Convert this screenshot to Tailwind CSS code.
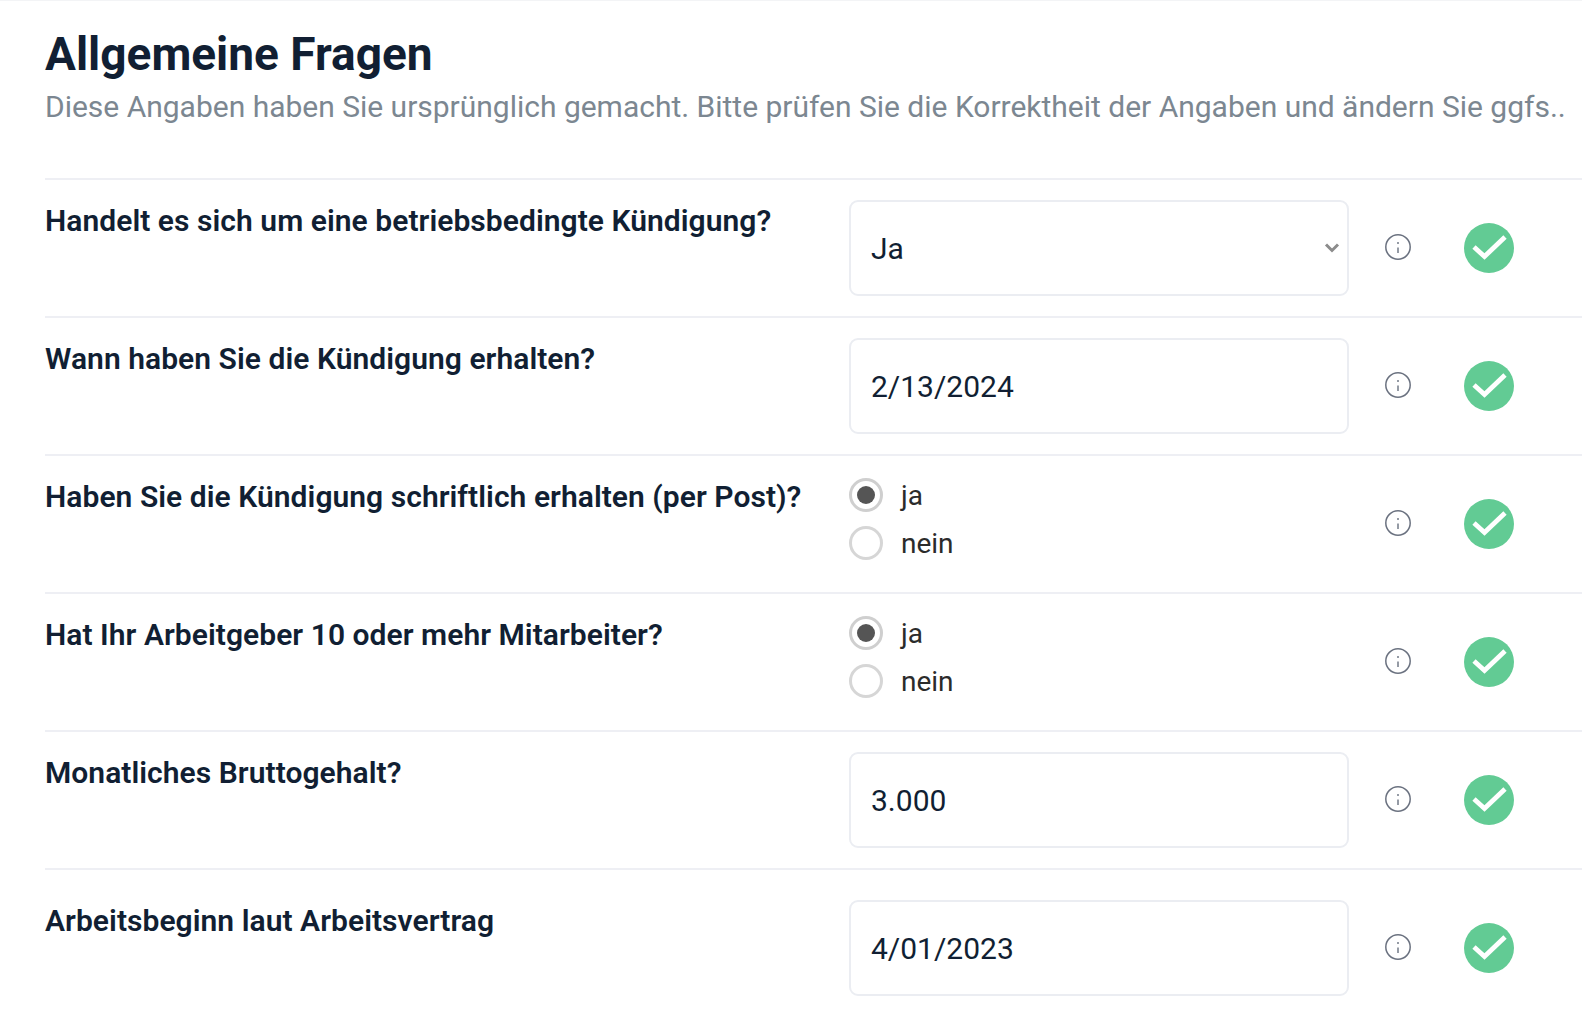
<!DOCTYPE html>
<html lang="de">
<head>
<meta charset="utf-8">
<title>Allgemeine Fragen</title>
<script src="https://cdn.jsdelivr.net/npm/@tailwindcss/browser@4"></script>
</head>
<body class="bg-white font-['Roboto',sans-serif] text-[#111f33] overflow-hidden">
<div class="w-[1582px] h-[1018px] pl-[45px] pt-[27px] border-t border-[#f3f4f6]">
  <h1 class="text-[46px] leading-[52px] font-bold">Allgemeine Fragen</h1>
  <p class="mt-[2px] text-[30px] leading-[50px] tracking-[-0.01px] text-[#7c8791] whitespace-nowrap">Diese Angaben haben Sie ursprünglich gemacht. Bitte prüfen Sie die Korrektheit der Angaben und ändern Sie ggfs..</p>
  <div class="mt-[46px]">

    <div class="flex h-[138px] border-t-2 border-[#eeeff4] pt-[20px]">
      <div class="w-[804px] pt-[1px] text-[30px] leading-[40px] tracking-[0.05px] font-semibold">Handelt es sich um eine betriebsbedingte Kündigung?</div>
      <div class="relative flex items-center w-[500px] h-[96px] px-[20px] border-2 border-[#ebedf2] rounded-[9px] text-[30px]">Ja
        <svg class="absolute right-[7px] top-[37px] w-[16px] h-[16px] text-[#8c8c8c]" viewBox="0 0 16 16" fill="none" stroke="currentColor" stroke-width="3"><path d="M2 5.500l6 6 6-6"/></svg>
      </div>
      <div class="flex self-start h-[96px] ml-[36px] gap-[53px] items-center">
        <svg class="w-[26px] h-[26px] -mt-[2px]" viewBox="0 0 26 26" fill="none"><circle cx="13" cy="13" r="12.200" stroke="#6b7280" stroke-width="1.500"/><path d="M13 13.500V19M13 8v2" stroke="#8a919c" stroke-width="1.800"/></svg>
        <svg class="w-[50px] h-[50px]" viewBox="0 0 50 50"><circle cx="25" cy="25" r="25" fill="#62cb94"/><path d="M10 24l10.500 9.500L41 14" fill="none" stroke="#fff" stroke-width="4.800"/></svg>
      </div>
    </div>

    <div class="flex h-[138px] border-t-2 border-[#eeeff4] pt-[20px]">
      <div class="w-[804px] pt-[1px] text-[30px] leading-[40px] tracking-[0.05px] font-semibold">Wann haben Sie die Kündigung erhalten?</div>
      <div class="flex items-center w-[500px] h-[96px] px-[20px] border-2 border-[#ebedf2] rounded-[9px] text-[30px]">2/13/2024</div>
      <div class="flex self-start h-[96px] ml-[36px] gap-[53px] items-center">
        <svg class="w-[26px] h-[26px] -mt-[2px]" viewBox="0 0 26 26" fill="none"><circle cx="13" cy="13" r="12.200" stroke="#6b7280" stroke-width="1.500"/><path d="M13 13.500V19M13 8v2" stroke="#8a919c" stroke-width="1.800"/></svg>
        <svg class="w-[50px] h-[50px]" viewBox="0 0 50 50"><circle cx="25" cy="25" r="25" fill="#62cb94"/><path d="M10 24l10.500 9.500L41 14" fill="none" stroke="#fff" stroke-width="4.800"/></svg>
      </div>
    </div>

    <div class="flex h-[138px] border-t-2 border-[#eeeff4] pt-[20px]">
      <div class="w-[804px] pt-[1px] text-[30px] leading-[40px] tracking-[0.05px] font-semibold">Haben Sie die Kündigung schriftlich erhalten (per Post)?</div>
      <div class="w-[500px] h-[96px] -mt-[4px] text-[28px] text-[#2b2b2b]">
        <div class="flex items-center h-[48px] gap-[18px]"><span class="flex items-center justify-center w-[34px] h-[34px] -mt-[2px] rounded-full border-[3px] border-[#cfcfcf]"><span class="w-[18px] h-[18px] rounded-full bg-[#555555]"></span></span>ja</div>
        <div class="flex items-center h-[48px] gap-[18px]"><span class="w-[34px] h-[34px] -mt-[2px] rounded-full border-[3px] border-[#d6d6d6]"></span>nein</div>
      </div>
      <div class="flex self-start h-[96px] ml-[36px] gap-[53px] items-center">
        <svg class="w-[26px] h-[26px] -mt-[2px]" viewBox="0 0 26 26" fill="none"><circle cx="13" cy="13" r="12.200" stroke="#6b7280" stroke-width="1.500"/><path d="M13 13.500V19M13 8v2" stroke="#8a919c" stroke-width="1.800"/></svg>
        <svg class="w-[50px] h-[50px]" viewBox="0 0 50 50"><circle cx="25" cy="25" r="25" fill="#62cb94"/><path d="M10 24l10.500 9.500L41 14" fill="none" stroke="#fff" stroke-width="4.800"/></svg>
      </div>
    </div>

    <div class="flex h-[138px] border-t-2 border-[#eeeff4] pt-[20px]">
      <div class="w-[804px] pt-[1px] text-[30px] leading-[40px] tracking-[0.05px] font-semibold">Hat Ihr Arbeitgeber 10 oder mehr Mitarbeiter?</div>
      <div class="w-[500px] h-[96px] -mt-[4px] text-[28px] text-[#2b2b2b]">
        <div class="flex items-center h-[48px] gap-[18px]"><span class="flex items-center justify-center w-[34px] h-[34px] -mt-[2px] rounded-full border-[3px] border-[#cfcfcf]"><span class="w-[18px] h-[18px] rounded-full bg-[#555555]"></span></span>ja</div>
        <div class="flex items-center h-[48px] gap-[18px]"><span class="w-[34px] h-[34px] -mt-[2px] rounded-full border-[3px] border-[#d6d6d6]"></span>nein</div>
      </div>
      <div class="flex self-start h-[96px] ml-[36px] gap-[53px] items-center">
        <svg class="w-[26px] h-[26px] -mt-[2px]" viewBox="0 0 26 26" fill="none"><circle cx="13" cy="13" r="12.200" stroke="#6b7280" stroke-width="1.500"/><path d="M13 13.500V19M13 8v2" stroke="#8a919c" stroke-width="1.800"/></svg>
        <svg class="w-[50px] h-[50px]" viewBox="0 0 50 50"><circle cx="25" cy="25" r="25" fill="#62cb94"/><path d="M10 24l10.500 9.500L41 14" fill="none" stroke="#fff" stroke-width="4.800"/></svg>
      </div>
    </div>

    <div class="flex h-[138px] border-t-2 border-[#eeeff4] pt-[20px]">
      <div class="w-[804px] pt-[1px] text-[30px] leading-[40px] tracking-[0.05px] font-semibold">Monatliches Bruttogehalt?</div>
      <div class="flex items-center w-[500px] h-[96px] px-[20px] border-2 border-[#ebedf2] rounded-[9px] text-[30px]">3.000</div>
      <div class="flex self-start h-[96px] ml-[36px] gap-[53px] items-center">
        <svg class="w-[26px] h-[26px] -mt-[2px]" viewBox="0 0 26 26" fill="none"><circle cx="13" cy="13" r="12.200" stroke="#6b7280" stroke-width="1.500"/><path d="M13 13.500V19M13 8v2" stroke="#8a919c" stroke-width="1.800"/></svg>
        <svg class="w-[50px] h-[50px]" viewBox="0 0 50 50"><circle cx="25" cy="25" r="25" fill="#62cb94"/><path d="M10 24l10.500 9.500L41 14" fill="none" stroke="#fff" stroke-width="4.800"/></svg>
      </div>
    </div>

    <div class="flex border-t-2 border-[#eeeff4] pt-[30px]">
      <div class="w-[804px] pt-[1px] text-[30px] leading-[40px] tracking-[0.05px] font-semibold">Arbeitsbeginn laut Arbeitsvertrag</div>
      <div class="flex items-center w-[500px] h-[96px] px-[20px] border-2 border-[#ebedf2] rounded-[9px] text-[30px]">4/01/2023</div>
      <div class="flex self-start h-[96px] ml-[36px] gap-[53px] items-center">
        <svg class="w-[26px] h-[26px] -mt-[2px]" viewBox="0 0 26 26" fill="none"><circle cx="13" cy="13" r="12.200" stroke="#6b7280" stroke-width="1.500"/><path d="M13 13.500V19M13 8v2" stroke="#8a919c" stroke-width="1.800"/></svg>
        <svg class="w-[50px] h-[50px]" viewBox="0 0 50 50"><circle cx="25" cy="25" r="25" fill="#62cb94"/><path d="M10 24l10.500 9.500L41 14" fill="none" stroke="#fff" stroke-width="4.800"/></svg>
      </div>
    </div>

  </div>
</div>
</body>
</html>
